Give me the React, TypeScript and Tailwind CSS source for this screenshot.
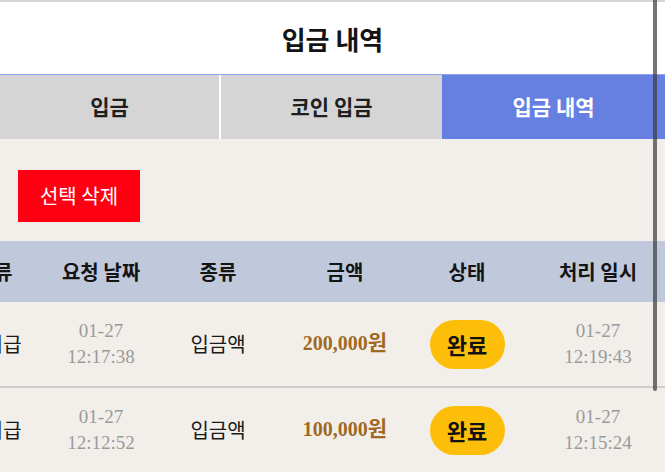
const rows = [
  { kind: '미지급', date: ['01-27', '12:17:38'], type: '입금액', amount: '200,000', done: ['01-27', '12:19:43'] },
  { kind: '미지급', date: ['01-27', '12:12:52'], type: '입금액', amount: '100,000', done: ['01-27', '12:15:24'] },
]

const cols = 'grid grid-cols-[118px_96px_138px_116px_128px_134px] ml-[-65px] w-[730px]'

const kr = '[font-family:"Noto_Sans_CJK_KR","Noto_Sans",sans-serif]'
const serif = '[font-family:"Liberation_Serif","Noto_Sans_CJK_KR",serif]'

export default function App() {
  return (
    <div className={`relative h-[472px] w-[665px] overflow-hidden bg-[#f2efeb] ${kr}`}>
      <header className="flex h-[75px] items-center justify-center border-t-2 border-b border-t-[#d6d6d6] border-b-[#8ea4ec] bg-white">
        <h1 className="text-[26px] font-bold text-[#141414]">입금 내역</h1>
      </header>

      <nav className="grid h-[64px] grid-cols-[221px_221px_223px] text-[21px] font-semibold">
        <div className="flex items-center justify-center border-r-2 border-white bg-[#d5d5d5] text-[#1e1e1e]">입금</div>
        <div className="flex items-center justify-center bg-[#d5d5d5] text-[#1e1e1e]">코인 입금</div>
        <div className="flex items-center justify-center bg-[#6680e2] text-white">입금 내역</div>
      </nav>

      <div className="px-[18px] pt-[31px] pb-[19px]">
        <button className="h-[52px] w-[122px] bg-[#ff0012] text-[20px] text-white">선택 삭제</button>
      </div>

      <div className={`${cols} h-[61px] items-center bg-[#c0c9dc] text-center text-[20px] font-bold text-[#141414]`}>
        <div>분류</div>
        <div>요청 날짜</div>
        <div>종류</div>
        <div>금액</div>
        <div>상태</div>
        <div>처리 일시</div>
      </div>

      {rows.map((r, i) => (
        <div key={i} className={`${cols} h-[86px] items-center border-b-2 border-[#cfcdca] text-center`}>
          <div className="text-[20px] text-[#1a1a1a]">{r.kind}</div>
          <div className={`${serif} text-[19px] leading-[26px] text-[#9a9a9a]`}>
            <div>{r.date[0]}</div>
            <div>{r.date[1]}</div>
          </div>
          <div className="text-[20px] text-[#1a1a1a]">{r.type}</div>
          <div className={`${serif} text-[20px] font-bold text-[#a0691f]`}>
            {r.amount}
            <span className="text-[21px]">원</span>
          </div>
          <div className="flex justify-center">
            <span className="flex h-[49px] w-[75px] items-center justify-center rounded-full bg-[#fdbe0a] text-[22px] font-bold text-[#111]">
              완료
            </span>
          </div>
          <div className={`${serif} text-[19px] leading-[26px] text-[#9a9a9a]`}>
            <div>{r.done[0]}</div>
            <div>{r.done[1]}</div>
          </div>
        </div>
      ))}

      <div className="absolute top-0 left-[653px] h-[391px] w-[4px] rounded-b-full bg-[#3a3a3a]/70" />
    </div>
  )
}
